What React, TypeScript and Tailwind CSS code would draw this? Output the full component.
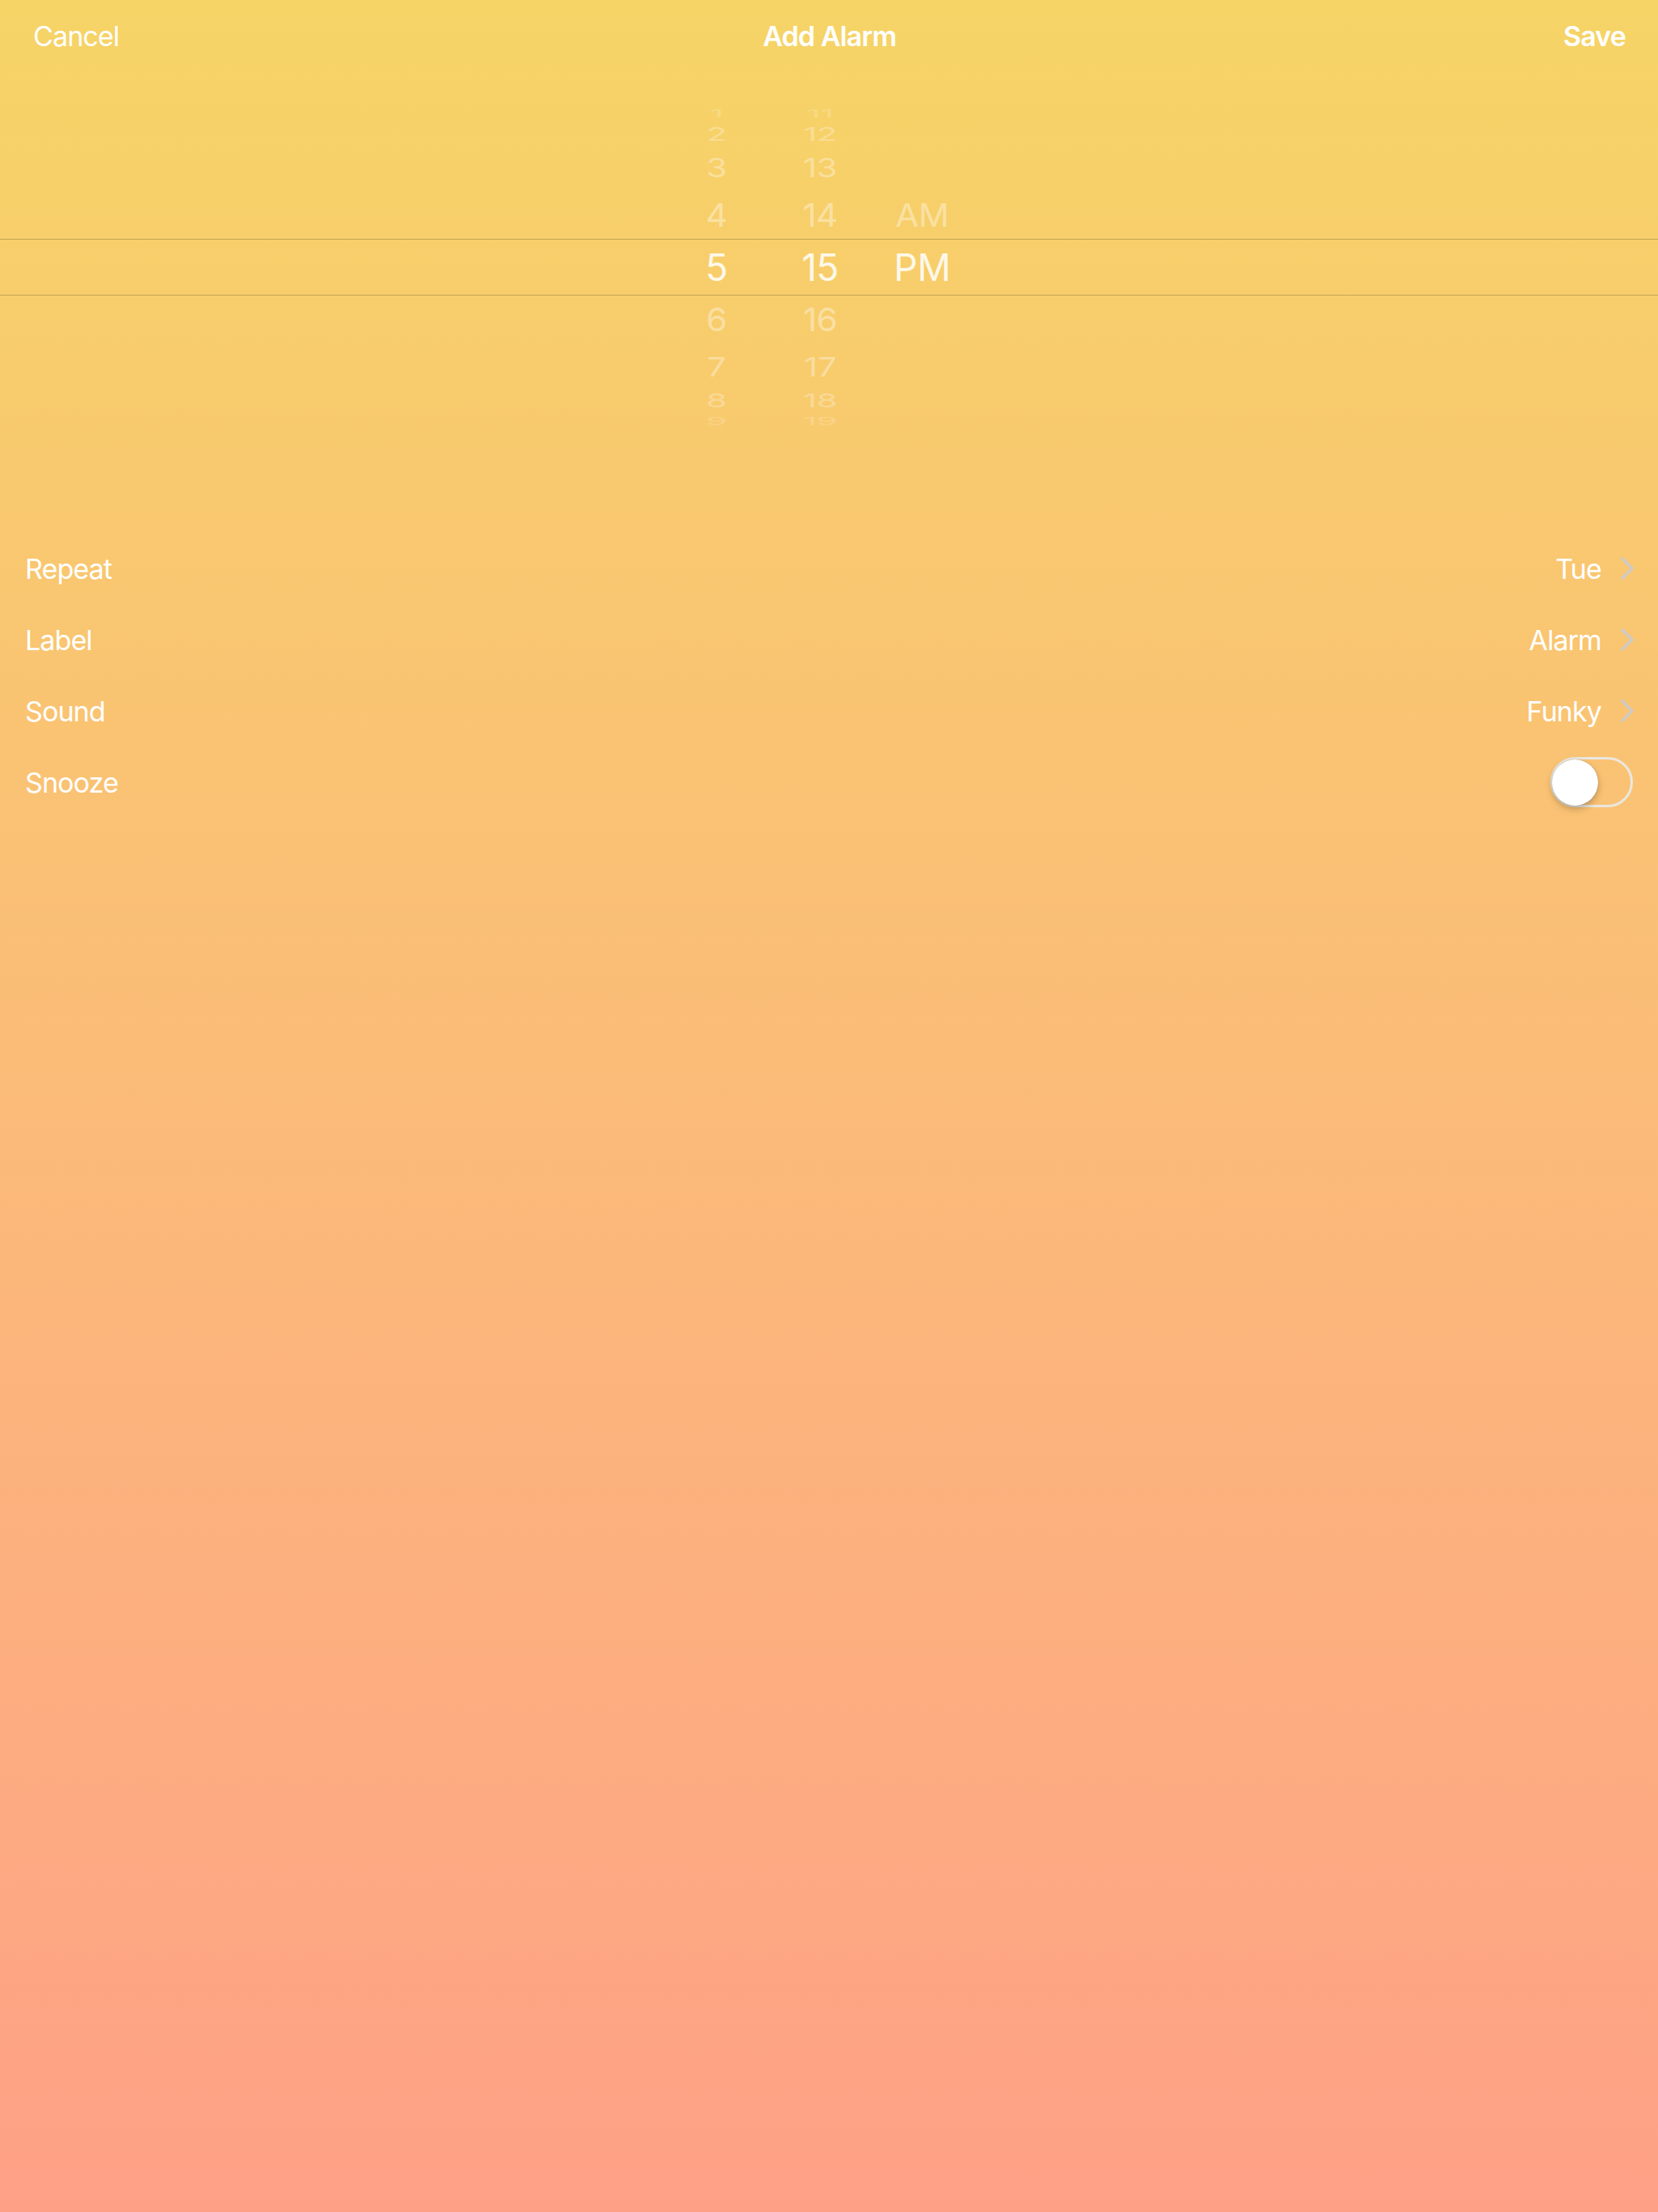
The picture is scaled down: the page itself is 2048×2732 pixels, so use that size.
type WheelSlot = {
  h: string;
  scale: string;
  tone: string;
  size: string;
};

// slots of the 3D wheel, top to bottom; the middle one is the selected row
const slots: WheelSlot[] = [
  { h: "h-[20px]", scale: "scale-y-[0.3]", tone: "text-white/20", size: "text-[42px]" },
  { h: "h-[30px]", scale: "scale-y-[0.56]", tone: "text-white/30", size: "text-[42px]" },
  { h: "h-[53px]", scale: "scale-y-[0.77]", tone: "text-white/35", size: "text-[42px]" },
  { h: "h-[64px]", scale: "scale-y-[0.95]", tone: "text-white/40", size: "text-[42px]" },
  { h: "h-[65px]", scale: "scale-y-100", tone: "text-white/85", size: "text-[46px]" },
  { h: "h-[64px]", scale: "scale-y-[0.95]", tone: "text-white/40", size: "text-[42px]" },
  { h: "h-[53px]", scale: "scale-y-[0.77]", tone: "text-white/35", size: "text-[42px]" },
  { h: "h-[30px]", scale: "scale-y-[0.56]", tone: "text-white/30", size: "text-[42px]" },
  { h: "h-[20px]", scale: "scale-y-[0.3]", tone: "text-white/20", size: "text-[42px]" },
];

function WheelColumn({ items, className }: { items: string[]; className: string }) {
  return (
    <div className={`flex flex-col ${className}`}>
      {slots.map((s, i) => (
        <div key={i} className={`${s.h} flex items-center justify-center`}>
          <span className={`${s.size} ${s.tone} ${s.scale} leading-none tracking-[-0.5px]`}>{items[i]}</span>
        </div>
      ))}
    </div>
  );
}

function Chevron() {
  return (
    <svg width="16" height="28" viewBox="0 0 16 28" fill="none" aria-hidden="true">
      <path d="M2 2 L14 14 L2 26" stroke="#cfcac6" strokeWidth="3.6" strokeLinecap="round" strokeLinejoin="round" />
    </svg>
  );
}

function Row({ label, value }: { label: string; value: string }) {
  return (
    <div className="flex h-[88px] items-center justify-between pl-[31px] pr-[30px]">
      <span>{label}</span>
      <div className="flex items-center gap-[24px]">
        <span>{value}</span>
        <Chevron />
      </div>
    </div>
  );
}

export default function App() {
  return (
    <div className="min-h-screen bg-gradient-to-b from-[#f6d466] to-[#fea086] font-['Inter','Liberation_Sans',sans-serif] text-[34px] tracking-[-0.9px] text-white">
      <header className="grid h-[88px] grid-cols-3 items-center pl-[41px] pr-[40px]">
        <button type="button" className="justify-self-start">Cancel</button>
        <h1 className="justify-self-center font-semibold">Add Alarm</h1>
        <button type="button" className="justify-self-end font-semibold">Save</button>
      </header>

      <div className="relative mt-[46px] flex h-[392px] items-center overflow-hidden">
        <div className="pointer-events-none absolute inset-x-0 top-[161px] h-[70px] border-y-[1.5px] border-black/20" />
        <div className="flex pl-[825px]">
          <WheelColumn className="w-[120px]" items={["1", "2", "3", "4", "5", "6", "7", "8", "9"]} />
          <WheelColumn
            className="ml-[8px] w-[120px]"
            items={["11", "12", "13", "14", "15", "16", "17", "18", "19"]}
          />
          <WheelColumn className="ml-[6px] w-[120px]" items={["", "", "", "AM", "PM", "", "", "", ""]} />
        </div>
      </div>

      <div className="mt-[132px]">
        <Row label="Repeat" value="Tue" />
        <Row label="Label" value="Alarm" />
        <Row label="Sound" value="Funky" />
        <div className="flex h-[88px] items-center justify-between pl-[31px] pr-[31px]">
          <span>Snooze</span>
          <button
            type="button"
            role="switch"
            aria-checked="false"
            className="flex h-[62px] w-[102px] items-center rounded-full border-[3px] border-[#ebe7df] p-[0px]"
          >
            <span className="ml-[-1px] h-[57px] w-[57px] rounded-full bg-white shadow-[0_4px_8px_rgba(0,0,0,0.25),0_0_1px_rgba(0,0,0,0.3)]" />
          </button>
        </div>
      </div>
    </div>
  );
}
